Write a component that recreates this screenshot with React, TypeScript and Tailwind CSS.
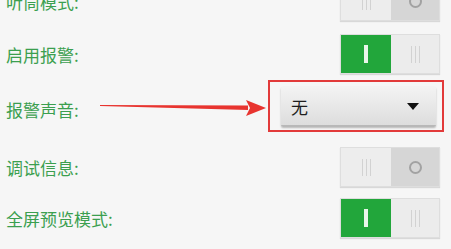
import React from "react";

const font = { fontFamily: '"Noto Sans CJK SC", "Noto Sans", sans-serif' };

function Lines() {
  return (
    <div className="flex gap-[3px]">
      <div className="w-px h-[17px] bg-[#d2d2d2]" />
      <div className="w-px h-[17px] bg-[#d2d2d2]" />
      <div className="w-px h-[17px] bg-[#d2d2d2]" />
    </div>
  );
}

function Toggle({ on }: { on: boolean }) {
  return (
    <div className="flex w-[100px] h-[40px] border border-[#dedede] shadow-[0_1px_1px_rgba(0,0,0,0.12)] bg-[#ececec]">
      {on ? (
        <div className="w-[50px] h-full bg-[#22a63b] flex items-center justify-center">
          <div className="w-[4px] h-[18px] bg-[#e9f6ea]" />
        </div>
      ) : (
        <div className="w-[50px] h-full bg-[#ededed] flex items-center justify-center">
          <Lines />
        </div>
      )}
      {on ? (
        <div className="flex-1 h-full bg-[#ececec] flex items-center justify-center">
          <Lines />
        </div>
      ) : (
        <div className="flex-1 h-full bg-[#d6d6d6] flex items-center justify-center">
          <div className="w-[13px] h-[13px] rounded-full border-2 border-[#a2a2a2]" />
        </div>
      )}
    </div>
  );
}

function Label({ children }: { children: React.ReactNode }) {
  return <span className="text-[17px] leading-none text-[#3b9f4f]">{children}</span>;
}

export default function App() {
  return (
    <div className="relative w-[451px] h-[249px] overflow-hidden bg-[#f6f6f6]" style={font}>
      <div className="flex flex-col mt-[-19px]">
        <div className="flex items-center justify-between pl-[6px] pr-[11px] h-[40px]">
          <span className="mt-[2px]"><Label>听筒模式:</Label></span>
          <Toggle on={false} />
        </div>
        <div className="flex items-center justify-between pl-[6px] pr-[11px] h-[40px] mt-[13px]">
          <Label>启用报警:</Label>
          <Toggle on={true} />
        </div>
        <div className="flex items-center justify-between pl-[6px] pr-[7px] h-[52px] mt-[6px]">
          <span className="mt-[7px]"><Label>报警声音:</Label></span>
          <div className="w-[176px] h-[52px] border-2 border-[#e23a3a] pl-[11px] pr-[6px] pt-[5px] pb-[3px]">
            <div className="h-full flex items-center justify-between pl-[10px] pr-[17px] rounded-[2px] bg-gradient-to-b from-[#f3f3f3] to-[#dddddd] border-b-2 border-[#b8b8b8] shadow-[0_1px_2px_rgba(0,0,0,0.25)]">
              <span className="text-[17px] leading-none text-[#1e1e1e]">无</span>
              <svg width="12" height="7" viewBox="0 0 12 7">
                <polygon points="0,0 12,0 6,7" fill="#111" />
              </svg>
            </div>
          </div>
        </div>
        <div className="flex items-center justify-between pl-[6px] pr-[11px] h-[40px] mt-[15px]">
          <span className="mt-[2px]"><Label>调试信息:</Label></span>
          <Toggle on={false} />
        </div>
        <div className="flex items-center justify-between pl-[6px] pr-[11px] h-[40px] mt-[11px]">
          <Label>全屏预览模式:</Label>
          <Toggle on={true} />
        </div>
      </div>
      <svg className="absolute left-0 top-0" width="451" height="249" viewBox="0 0 451 249">
        <polygon points="100,105 248,105.5 248,110 100,106" fill="#e8342f" />
        <polygon points="246,100 266,108 246,116 250,108" fill="#e8342f" />
      </svg>
    </div>
  );
}
